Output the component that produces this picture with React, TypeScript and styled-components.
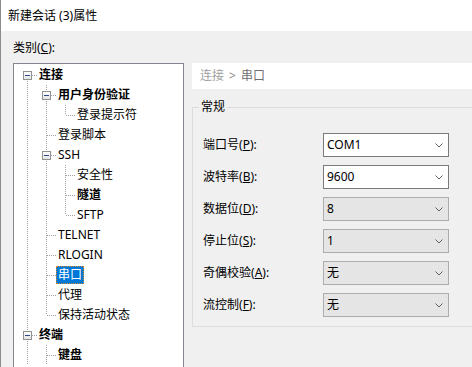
import React from 'react';
import styled, { createGlobalStyle } from 'styled-components';

const Global = createGlobalStyle`
  html, body { margin: 0; padding: 0; background: #f0f0f0; }
  body {
    font-family: "Noto Sans", "Noto Sans CJK SC", sans-serif;
    font-size: 12px;
    color: #000;
  }
  * { box-sizing: border-box; }
`;

const Window = styled.div`
  width: 472px;
  height: 367px;
  overflow: hidden;
  background: #f0f0f0;
  border-left: 1px solid #8c8c8c;
  display: flex;
  flex-direction: column;
`;

const TitleBar = styled.div`
  height: 31px;
  flex: none;
  background: #fff;
  display: flex;
  align-items: center;
  padding-left: 7px;
  line-height: 16px;
`;

const Body = styled.div`
  flex: 1;
  min-height: 0;
  display: grid;
  grid-template-columns: 171px 1fr;
  grid-template-rows: 16px 1fr;
  row-gap: 7px;
  column-gap: 8px;
  padding: 9px 0 0 12px;
`;

const CategoryLabel = styled.div`
  line-height: 16px;
  grid-column: 1 / 3;
`;

const TreeBox = styled.div`
  border: 1px solid #828790;
  border-bottom: none;
  background: #fff;
  padding: 1px 0 0 4px;
  overflow: hidden;
  min-height: 0;
`;

const Row = styled.div`
  display: flex;
  height: 20px;
  align-items: center;
`;

const NodeLabel = styled.span<{ $bold?: boolean; $selected?: boolean }>`
  height: 18px;
  line-height: 16px;
  padding: 0 1px;
  white-space: nowrap;
  font-weight: ${(p) => (p.$bold ? 700 : 400)};
  border: 1px dotted ${(p) => (p.$selected ? '#d88a20' : 'transparent')};
  background: ${(p) => (p.$selected ? '#0078d7' : 'transparent')};
  color: ${(p) => (p.$selected ? '#fff' : '#000')};
`;

const GuideSvg = styled.svg`
  flex: none;
  display: block;
`;

type GuideProps = { up?: boolean; down?: boolean; horiz?: boolean; box?: boolean };

const DOT = '#a0a0a0';

function Guide({ up, down, horiz, box }: GuideProps) {
  return (
    <GuideSvg width={19} height={20} viewBox="0 0 19 20" shapeRendering="crispEdges">
      {up && <line x1={9.5} y1={0} x2={9.5} y2={10} stroke={DOT} strokeDasharray="1 1" />}
      {down && <line x1={9.5} y1={10} x2={9.5} y2={20} stroke={DOT} strokeDasharray="1 1" />}
      {horiz && <line x1={10} y1={10.5} x2={19} y2={10.5} stroke={DOT} strokeDasharray="1 1" />}
      {box && (
        <>
          <defs>
            <linearGradient id="bx" x1="0" y1="0" x2="0" y2="1">
              <stop offset="0" stopColor="#ffffff" />
              <stop offset="1" stopColor="#e2e2e2" />
            </linearGradient>
          </defs>
          <rect x={5.5} y={6.5} width={8} height={8} fill="url(#bx)" stroke="#919191" />
          <line x1={7} y1={10.5} x2={12} y2={10.5} stroke="#2b4a8b" />
        </>
      )}
    </GuideSvg>
  );
}

type TNode = { label: string; bold?: boolean; selected?: boolean; more?: boolean; children?: TNode[] };

const tree: TNode[] = [
  {
    label: '连接',
    bold: true,
    children: [
      { label: '用户身份验证', bold: true, children: [{ label: '登录提示符' }] },
      { label: '登录脚本' },
      { label: 'SSH', children: [{ label: '安全性' }, { label: '隧道', bold: true }, { label: 'SFTP' }] },
      { label: 'TELNET' },
      { label: 'RLOGIN' },
      { label: '串口', selected: true },
      { label: '代理' },
      { label: '保持活动状态' },
    ],
  },
  {
    label: '终端',
    bold: true,
    more: true,
    children: [{ label: '键盘', bold: true, more: true }],
  },
];

type Flat = { node: TNode; ancestors: boolean[]; hasNext: boolean; first: boolean };

function flatten(nodes: TNode[], ancestors: boolean[], out: Flat[], root: boolean) {
  nodes.forEach((n, i) => {
    const hasNext = i < nodes.length - 1 || !!n.more;
    out.push({ node: n, ancestors, hasNext, first: root && i === 0 });
    if (n.children) flatten(n.children, [...ancestors, hasNext], out, false);
  });
  return out;
}

const rows = flatten(tree, [], [], true);

const Panel = styled.div`
  display: flex;
  flex-direction: column;
  gap: 10px;
  min-width: 0;
`;

const Breadcrumb = styled.div`
  height: 26px;
  background: #fff;
  display: flex;
  align-items: center;
  padding-left: 8px;
  line-height: 16px;
  white-space: nowrap;
`;

const Crumb = styled.span<{ $current?: boolean }>`
  color: ${(p) => (p.$current ? '#707070' : '#a0a0a0')};
`;

const Sep = styled.span`
  color: #8a8a8a;
  margin: 0 5px;
`;

const Group = styled.fieldset`
  margin: 0;
  padding: 18px 0 9px 10px;
  border: 1px solid #dcdcdc;
  border-right: none;
  min-width: 0;
`;

const Legend = styled.legend`
  padding: 0 2px;
  margin-left: -4px;
  line-height: 16px;
`;

const Form = styled.div`
  display: grid;
  grid-template-columns: 120px 126px;
  grid-auto-rows: 24px;
  row-gap: 8px;
  align-items: center;
`;

const FieldLabel = styled.label`
  line-height: 16px;
  white-space: nowrap;
`;

const Combo = styled.div<{ $editable?: boolean }>`
  height: 24px;
  border: 1px solid ${(p) => (p.$editable ? '#7a7a7a' : '#adadad')};
  background: ${(p) => (p.$editable ? '#ffffff' : '#e5e5e5')};
  display: flex;
  align-items: center;
  justify-content: space-between;
  padding: 0 5px 0 3px;
  line-height: 16px;
`;

function Chevron() {
  return (
    <svg width={8} height={5} viewBox="0 0 8 5">
      <polyline points="0.5,0.5 4,4 7.5,0.5" fill="none" stroke="#606060" strokeWidth={1} />
    </svg>
  );
}

const fields: { pre: string; key: string; value: string; editable?: boolean }[] = [
  { pre: '端口号', key: 'P', value: 'COM1', editable: true },
  { pre: '波特率', key: 'B', value: '9600', editable: true },
  { pre: '数据位', key: 'D', value: '8' },
  { pre: '停止位', key: 'S', value: '1' },
  { pre: '奇偶校验', key: 'A', value: '无' },
  { pre: '流控制', key: 'F', value: '无' },
];

export default function App() {
  return (
    <>
      <Global />
      <Window>
        <TitleBar>新建会话 (3)属性</TitleBar>
        <Body>
          <CategoryLabel>
            类别(<u>C</u>):
          </CategoryLabel>
          <TreeBox>
            {rows.map((r, i) => (
              <Row key={i}>
                {r.ancestors.map((cont, j) => (
                  <Guide key={j} up={cont} down={cont} />
                ))}
                <Guide up={!r.first} down={r.hasNext} horiz box={!!r.node.children} />
                <NodeLabel $bold={r.node.bold} $selected={r.node.selected}>
                  {r.node.label}
                </NodeLabel>
              </Row>
            ))}
          </TreeBox>
          <Panel>
            <Breadcrumb>
              <Crumb>连接</Crumb>
              <Sep>&gt;</Sep>
              <Crumb $current>串口</Crumb>
            </Breadcrumb>
            <Group>
              <Legend>常规</Legend>
              <Form>
                {fields.map((f) => (
                  <React.Fragment key={f.key}>
                    <FieldLabel>
                      {f.pre}(<u>{f.key}</u>):
                    </FieldLabel>
                    <Combo $editable={f.editable}>
                      <span>{f.value}</span>
                      <Chevron />
                    </Combo>
                  </React.Fragment>
                ))}
              </Form>
            </Group>
          </Panel>
        </Body>
      </Window>
    </>
  );
}
